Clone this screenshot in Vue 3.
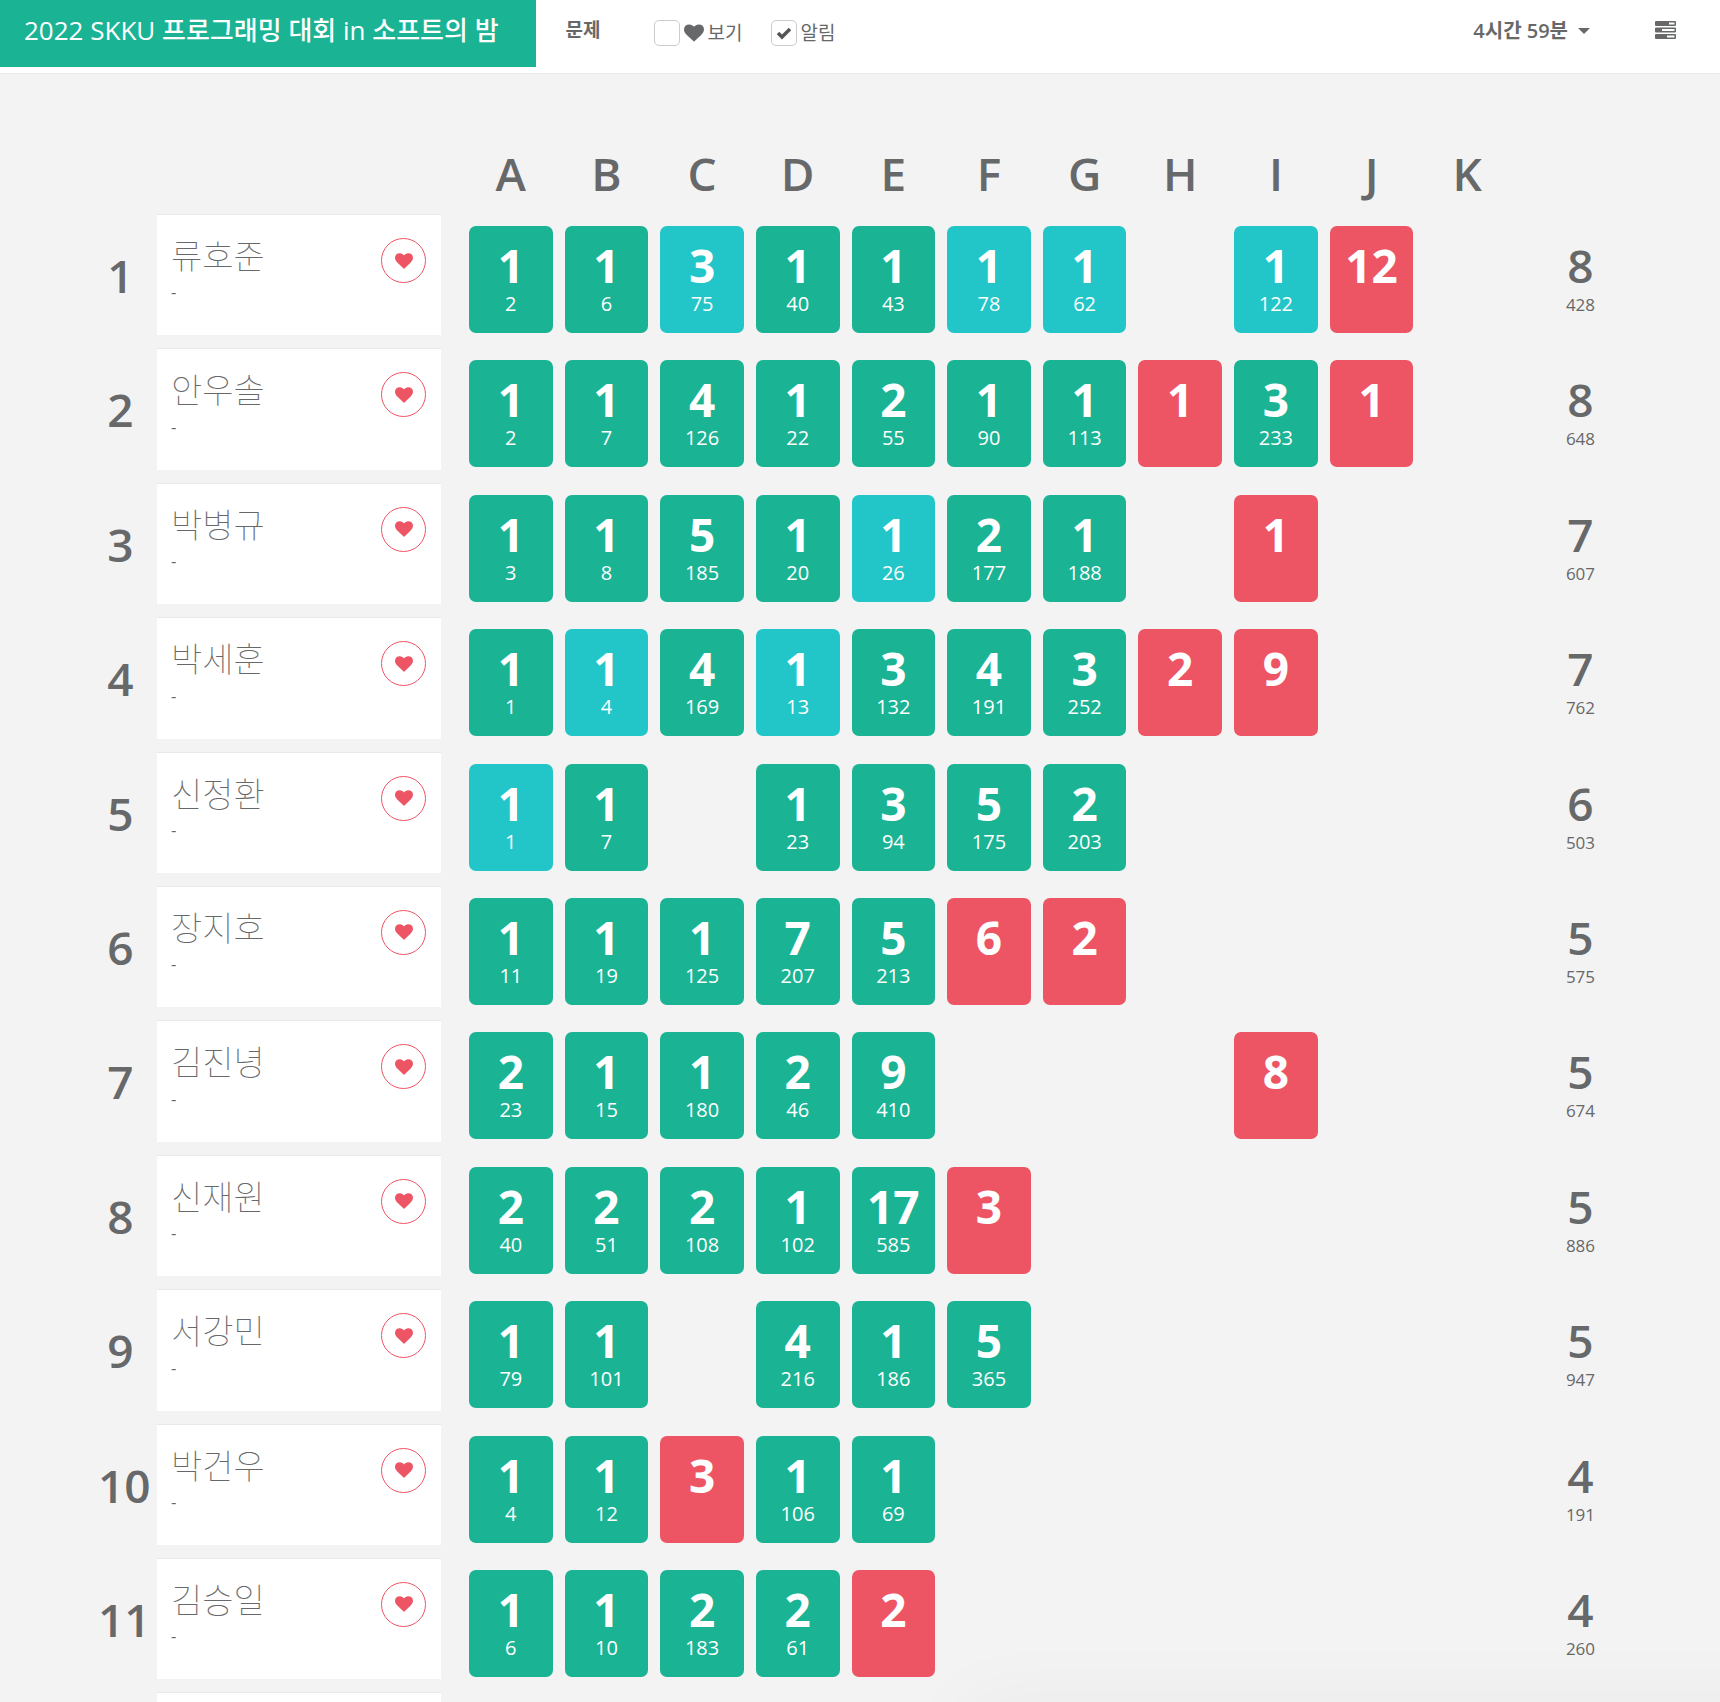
<script setup>
import { ref } from 'vue'

const heart =
  'M896 1664q-26 0-44-18l-624-602q-10-8-27.5-26t-55.5-65.5-68-97.5-53.5-121-23.5-138q0-220 127-344t351-124q62 0 126.5 21.5t120 58 95.5 68.5 76 68q36-36 76-68t95.5-68.5 120-58 126.5-21.5q224 0 351 124t127 344q0 221-229 450l-623 600q-18 18-44 18z'

const problems = 'ABCDEFGHIJK'.split('')
const onlyFavorites = ref(false)
const notify = ref(true)

// Each problem: "tries/minute" when solved, a leading * marks the first solver,
// "tries" alone is unsolved, "." is untouched.
const source = [
  ['류호준', '1/2 1/6 *3/75 1/40 1/43 *1/78 *1/62 . *1/122 12 .', 8, 428],
  ['안우솔', '1/2 1/7 4/126 1/22 2/55 1/90 1/113 1 3/233 1 .', 8, 648],
  ['박병규', '1/3 1/8 5/185 1/20 *1/26 2/177 1/188 . 1 . .', 7, 607],
  ['박세훈', '1/1 *1/4 4/169 *1/13 3/132 4/191 3/252 2 9 . .', 7, 762],
  ['신정환', '*1/1 1/7 . 1/23 3/94 5/175 2/203 . . . .', 6, 503],
  ['장지호', '1/11 1/19 1/125 7/207 5/213 6 2 . . . .', 5, 575],
  ['김진녕', '2/23 1/15 1/180 2/46 9/410 . . . 8 . .', 5, 674],
  ['신재원', '2/40 2/51 2/108 1/102 17/585 3 . . . . .', 5, 886],
  ['서강민', '1/79 1/101 . 4/216 1/186 5/365 . . . . .', 5, 947],
  ['박건우', '1/4 1/12 3 1/106 1/69 . . . . . .', 4, 191],
  ['김승일', '1/6 1/10 2/183 2/61 2 . . . . . .', 4, 260],
]

function parse(mark) {
  if (mark === '.') return null
  const [tries, time] = mark.replace('*', '').split('/')
  const state = !time ? 'failed' : mark.startsWith('*') ? 'first' : 'solved'
  return { tries, time, state }
}

const teams = source.map(([name, marks, solved, penalty], i) => ({
  rank: i + 1,
  name,
  cells: marks.split(' ').map(parse),
  solved,
  penalty,
}))
</script>

<template>
  <div class="page">
    <header class="topbar">
      <a class="brand" href="#">2022 SKKU 프로그래밍 대회 in 소프트의 밤</a>
      <nav class="menu">
        <a class="problems" href="#">문제</a>
        <label class="option favorites">
          <input v-model="onlyFavorites" type="checkbox" />
          <svg class="label-heart" viewBox="0 0 1792 1792" aria-hidden="true"><path :d="heart" /></svg>
          <span>보기</span>
        </label>
        <label class="option">
          <input v-model="notify" type="checkbox" />
          <span>알림</span>
        </label>
      </nav>
      <button class="clock" type="button">
        4시간 59분
        <svg viewBox="0 0 12 6" aria-hidden="true"><path d="M0 0h12L6 6z" /></svg>
      </button>
      <button class="tasks" type="button" aria-label="목록">
        <svg viewBox="0 0 21 18" aria-hidden="true">
          <path
            fill-rule="evenodd"
            d="M0 1q0-1 1-1h19q1 0 1 1v3q0 1-1 1H1q-1 0-1-1zM14 1.500v2h5.500v-2zM0 7.500q0-1 1-1h19q1 0 1 1v3q0 1-1 1H1q-1 0-1-1zM7 8v2h12.500v-2zM0 14q0-1 1-1h19q1 0 1 1v3q0 1-1 1H1q-1 0-1-1zM12 14.500v2h7.500v-2z"
          />
        </svg>
      </button>
    </header>

    <main>
      <table class="board">
        <thead>
          <tr>
            <th></th>
            <th></th>
            <th v-for="p in problems" :key="p" scope="col">{{ p }}</th>
            <th></th>
          </tr>
        </thead>
        <tbody>
          <tr v-for="team in teams" :key="team.rank">
            <td class="rank">{{ team.rank }}</td>
            <td class="card">
              <div>
                <h2>{{ team.name }}</h2>
                <p>-</p>
              </div>
              <button type="button" :aria-label="team.name">
                <svg viewBox="0 0 1792 1792" aria-hidden="true"><path :d="heart" /></svg>
              </button>
            </td>
            <td v-for="(cell, i) in team.cells" :key="i" class="slot">
              <div v-if="cell" class="tile" :class="cell.state">
                <strong>{{ cell.tries }}</strong>
                <span>{{ cell.time }}</span>
              </div>
            </td>
            <td class="total">
              <strong>{{ team.solved }}</strong>
              <span>{{ team.penalty }}</span>
            </td>
          </tr>
          <tr>
            <td></td>
            <td class="card"></td>
          </tr>
        </tbody>
      </table>
    </main>
  </div>
</template>

<style>
body {
  background: #f3f3f3;
}
</style>

<style scoped>
.page {
  position: relative;
  height: 100vh;
  overflow: hidden;
  background: #f3f3f3;
  color: #676869;
  font-family: 'Open Sans', 'Noto Sans CJK KR', sans-serif;
}

/* soft shade rising from the bottom right edge */
.page::after {
  content: '';
  position: absolute;
  top: 100%;
  right: -100px;
  left: 56%;
  height: 100px;
  box-shadow: 0 0 80px rgba(0, 0, 0, 0.04);
}

a {
  color: inherit;
  text-decoration: none;
}

button {
  padding: 0;
  border: 0;
  background: none;
  color: inherit;
  font: inherit;
  cursor: pointer;
}

svg {
  display: block;
  fill: currentColor;
}

.topbar {
  display: flex;
  align-items: flex-start;
  height: 73px;
  border-bottom: 1px solid #e7eaec;
  background: #fff;
}

.brand {
  box-sizing: border-box;
  height: 67px;
  padding: 0 37px 0 24px;
  background: #1ab394;
  color: #fff;
  font-size: 26px;
  font-weight: 500;
  line-height: 60px;
  white-space: nowrap;
}

.menu {
  display: flex;
  flex: 1;
  padding-left: 30px;
  font-size: 19px;
  line-height: 60px;
}

.problems {
  margin-right: 53px;
  font-weight: 600;
}

.option {
  display: flex;
  align-items: center;
  gap: 4px;
  height: 66px;
}

.favorites {
  margin-right: 28px;
}

.option input {
  appearance: none;
  width: 26px;
  height: 26px;
  margin: 0;
  border: 1px solid #ccc;
  border-radius: 5px;
  background: #fff;
}

.option input:checked {
  background: #fff
    url("data:image/svg+xml,%3Csvg xmlns='http://www.w3.org/2000/svg' viewBox='0 0 24 24'%3E%3Cpath d='M6 12l4 4 8-8' fill='none' stroke='%23555' stroke-width='3.500'/%3E%3C/svg%3E")
    center / 24px no-repeat;
}

.label-heart {
  width: 20px;
  height: 20px;
}

.clock {
  display: flex;
  align-items: center;
  gap: 10px;
  margin-right: 65px;
  font-size: 20px;
  font-weight: 600;
  line-height: 62px;
}

.clock svg {
  width: 12px;
  height: 6px;
}

.tasks {
  margin: 21px 44px 0 0;
}

.tasks svg {
  width: 21px;
  height: 18px;
}

main {
  padding: 74px 74px 0 98px;
}

.board,
.board thead {
  display: block;
}

.board tbody {
  display: grid;
  gap: 14px;
}

.board tr {
  display: grid;
  grid-template-columns: 45px 14px 284px 22px repeat(11, 1fr) 131px;
}

.board th,
.board td {
  padding: 0;
}

.board th:nth-child(2),
.board td:nth-child(2) {
  grid-column: 3 / 4;
}

.board th:nth-child(3),
.board td:nth-child(3) {
  grid-column: 5 / 6;
}

.board thead {
  padding-bottom: 17px;
}

th,
.rank,
strong {
  font-size: 46px;
  font-weight: 600;
  line-height: 50px;
  text-align: center;
}

.board .rank {
  padding-top: 35px;
}

.board .card {
  display: flex;
  align-items: flex-start;
  justify-content: space-between;
  min-height: 37px;
  padding: 23px 15px 33px 14px;
  background: #fff;
  box-shadow: 0 -1px #e7eaec;
}

h2 {
  margin: 0 0 7px;
  font-size: 34px;
  font-weight: 100;
  line-height: 1.1;
}

p {
  margin: 0;
  font-size: 17px;
  line-height: 20px;
}

.card button {
  display: grid;
  place-items: center;
  box-sizing: border-box;
  width: 45px;
  height: 45px;
  border: 1px solid #ed5565;
  border-radius: 50%;
  color: #ed5565;
}

.card button svg {
  width: 18px;
  height: 18px;
}

.slot {
  display: grid;
  align-items: start;
}

.tile,
.total {
  display: flex;
  flex-direction: column;
  text-align: center;
}

.tile {
  box-sizing: border-box;
  height: 107px;
  margin: 11px 6px 0;
  padding-top: 14px;
  border-radius: 7px;
  color: #fff;
}

.tile strong {
  font-weight: 700;
}

.tile span {
  font-size: 20px;
  font-weight: 500;
  line-height: 28px;
}

.board .total {
  padding-top: 25px;
}

.total span {
  font-size: 17px;
  line-height: 30px;
}

.solved {
  background: #1ab394;
}

.first {
  background: #23c6c8;
}

.failed {
  background: #ed5565;
}
</style>
